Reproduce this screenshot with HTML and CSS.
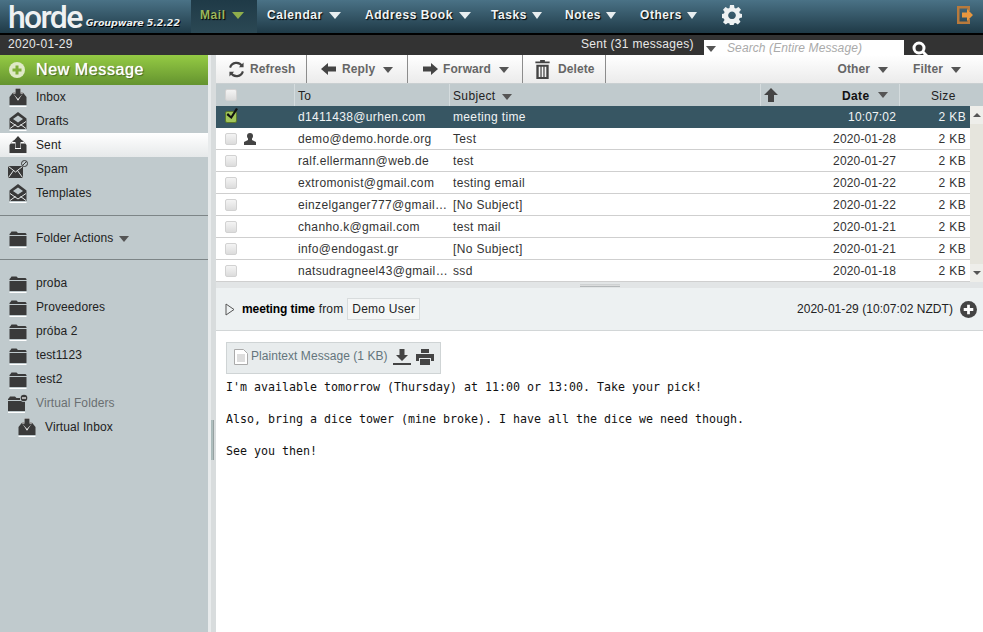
FILE: index.html
```html
<!DOCTYPE html>
<html lang="en">
<head>
<meta charset="utf-8">
<title>Horde Mail</title>
<link rel="stylesheet" href="styles.css">
</head>
<body>
<svg class="defs" width="0" height="0">
  <symbol id="i-inbox" viewBox="0 0 17 19"><path d="M4 4h9l4 5v8H0V9z"/><path d="M5 5.500h2V1h3v4.500h2L8.500 11z" fill="#fff" stroke="#fff" stroke-width="2"/><path d="M6 .5h5v5h2.500L8.500 11 3.500 5.500H6z"/><path d="M0 18h17v1H0z" fill="#fff"/></symbol>
  <symbol id="i-sent" viewBox="0 0 17 19"><path d="M4 4h9l4 5v8H0V9z"/><path d="M8.500 1l5 5.500h-3V12h-4V6.500h-3z" fill="#fff" stroke="#fff" stroke-width="2"/><path d="M8.500 0l5.500 6h-3v6H6V6H3z"/><path d="M0 18h17v1H0z" fill="#fff" opacity=".6"/></symbol>
  <symbol id="i-draft" viewBox="0 0 17 19"><path d="M8.500 0L17 6.500V17H0V6.500z"/><path d="M3.500 7l5-3.500 5 3.500-5 3.500z" fill="#c0cacd"/><path d="M.5 9.500l8 5.500 8-5.500M.5 16.500L6 12.500M16.500 16.500L11 12.500" fill="none" stroke="#e8ecec" stroke-width="1"/><path d="M0 18h17v1H0z" fill="#fff"/></symbol>
  <symbol id="i-spam" viewBox="0 0 20 19"><path d="M0 6h15v12H0z"/><path d="M.5 6.500l7 5.500 7-5.500M.5 17.500l5-7M14.500 17.500l-5-7" fill="none" stroke="#e8ecec"/><circle cx="16.500" cy="3.500" r="3" fill="#c0cacd" stroke="#3a3a3a"/><path d="M14.500 5.500l4-4" stroke="#3a3a3a"/></symbol>
  <symbol id="i-folder" viewBox="0 0 17 19"><path d="M1 4l1-1.500h5L8.500 4H16l1 1v1H0V5z"/><path d="M0 7h17v10H0z"/><path d="M0 18h17v1H0z" fill="#fff"/></symbol>
  <symbol id="i-vfolder" viewBox="0 0 20 19"><path d="M1 4l1-1.500h5L8.500 4H12v2H0V5z"/><path d="M0 7h15v1h2v9H0z"/><path d="M0 18h17v1H0z" fill="#fff"/><circle cx="16" cy="4" r="4" fill="#c0cacd"/><circle cx="16" cy="4" r="3.300"/><path d="M14 3.400h4v1.200h-4z" fill="#fff"/></symbol>
  <symbol id="i-person" viewBox="0 0 14 12"><circle cx="7" cy="3" r="3"/><path d="M5 5h4v2l4 2v3H1V9l4-2z"/></symbol>
</svg>

<header class="topbar">
  <div class="logo"><span class="logo-word">horde</span><span class="logo-ver">Groupware 5.2.22</span></div>
  <nav class="nav">
    <a class="nav-item active">Mail<i class="tri"></i></a>
    <a class="nav-item w-cal">Calendar<i class="tri"></i></a>
    <a class="nav-item w-addr">Address Book<i class="tri"></i></a>
    <a class="nav-item w-task">Tasks<i class="tri"></i></a>
    <a class="nav-item w-note">Notes<i class="tri"></i></a>
    <a class="nav-item w-oth">Others<i class="tri"></i></a>
    <svg class="gear" viewBox="0 0 20 20"><path fill-rule="evenodd" d="M8 0h4l.5 3 1.500.6L16.500 2 19 4.700 17.200 7l.7 1.500 2.100.5v3.500l-2.300.5-.7 1.600 1.500 2.200-2.700 2.600-2.200-1.500-1.600.6-.5 2.500H8l-.5-2.500-1.600-.6-2.200 1.500L1 17.300l1.500-2.200-.7-1.600-1.800-.5V9l2-.5.600-1.500L1 4.700 3.500 2 6 3.600 7.500 3zM10 6.500a3.800 3.800 0 1 0 .01 0z"/></svg>
  </nav>
  <svg class="exit" viewBox="0 0 18 20"><path d="M1 1h13v5h-2.500V3.500h-8v13h8V14H14v5H1z" fill="#b87a3c"/><path d="M6 7.500h5V4l6 6-6 6v-3.500H6z" fill="#e8973f"/></svg>
</header>

<div class="subbar">
  <span class="today">2020-01-29</span>
  <span class="msgcount">Sent (31 messages)</span>
  <div class="search"><i class="tri tri-grey"></i><span>Search (Entire Message)</span></div>
  <svg class="search-icon" viewBox="0 0 16 16"><circle cx="7" cy="7" r="5" fill="none" stroke="#fff" stroke-width="3"/><path d="M11 11l5 5" stroke="#fff" stroke-width="3"/></svg>
</div>

<div class="main">
  <aside class="sidebar">
    <div class="newmsg">
      <svg class="plus" viewBox="0 0 16 16"><circle cx="8" cy="8" r="8" fill="#dfe9c8"/><path d="M6.500 3.500h3v3h3v3h-3v3h-3v-3h-3v-3h3z" fill="#7fae3a"/></svg>
      <span>New Message</span>
    </div>
    <ul class="folders">
      <li class="folder"><svg class="ficon"><use href="#i-inbox"/></svg><span>Inbox</span></li>
      <li class="folder"><svg class="ficon"><use href="#i-draft"/></svg><span>Drafts</span></li>
      <li class="folder current"><svg class="ficon"><use href="#i-sent"/></svg><span>Sent</span></li>
      <li class="folder"><svg class="ficon"><use href="#i-spam"/></svg><span>Spam</span></li>
      <li class="folder"><svg class="ficon"><use href="#i-draft"/></svg><span>Templates</span></li>
    </ul>
    <div class="actions"><div class="folder"><svg class="ficon"><use href="#i-folder"/></svg><span>Folder Actions</span><i class="tri tri-grey tri-act"></i></div></div>
    <ul class="folders lower">
      <li class="folder"><svg class="ficon"><use href="#i-folder"/></svg><span>proba</span></li>
      <li class="folder"><svg class="ficon"><use href="#i-folder"/></svg><span>Proveedores</span></li>
      <li class="folder"><svg class="ficon"><use href="#i-folder"/></svg><span>próba 2</span></li>
      <li class="folder"><svg class="ficon"><use href="#i-folder"/></svg><span>test1123</span></li>
      <li class="folder"><svg class="ficon"><use href="#i-folder"/></svg><span>test2</span></li>
      <li class="folder muted"><svg class="ficon"><use href="#i-vfolder"/></svg><span>Virtual Folders</span></li>
      <li class="folder sub"><svg class="ficon"><use href="#i-inbox"/></svg><span>Virtual Inbox</span></li>
    </ul>
  </aside>
  <div class="vsplit"><i class="grip"></i></div>

  <section class="content">
    <div class="toolbar">
      <div class="tbtn b-refresh"><svg class="ticon" viewBox="0 0 18 18" fill="none" stroke="#444" stroke-width="2.200"><path d="M15 5.500A7 7 0 0 0 2.200 7"/><path d="M3 12.500A7 7 0 0 0 15.800 11"/><path d="M16.500 1.500v5h-5z" fill="#444" stroke="none"/><path d="M1.500 16.500v-5h5z" fill="#444" stroke="none"/></svg><span>Refresh</span></div>
      <div class="tbtn b-reply"><svg class="ticon" viewBox="0 0 16 14"><path d="M0 7l7-6v3.500h8v5H7V13z" fill="#444"/></svg><span>Reply</span><i class="tri tri-grey"></i></div>
      <div class="tbtn b-forward"><svg class="ticon" viewBox="0 0 16 14"><path d="M16 7L9 1v3.500H1v5h8V13z" fill="#444"/></svg><span>Forward</span><i class="tri tri-grey"></i></div>
      <div class="tbtn b-delete"><svg class="ticon trash" viewBox="0 0 15 20"><path d="M5 0h5v1.500h5v2H0v-2h5zM1 5h13v15H1zM3.500 7v11h1.800V7zM6.600 7v11h1.800V7zM9.700 7v11h1.800V7z" fill="#444" fill-rule="evenodd"/></svg><span>Delete</span></div>
      <div class="tb-right">
        <span class="tb-link">Other<i class="tri tri-grey"></i></span>
        <span class="tb-link">Filter<i class="tri tri-grey"></i></span>
      </div>
    </div>

    <div class="list-head">
      <div class="h-check"><i class="cb"></i></div>
      <div class="h-to">To</div>
      <div class="h-subj">Subject<i class="tri tri-grey"></i></div>
      <div class="h-date"><svg class="up" viewBox="0 0 14 15"><path d="M7 0l7 7H10v7H4V7H0z" fill="#444"/></svg><b>Date</b><i class="tri tri-grey"></i></div>
      <div class="h-size">Size</div>
    </div>

    <div class="list-wrap">
      <div class="rows">
        <div class="row selected"><div class="c-check"><i class="cb checked"><svg viewBox="0 0 14 14"><path d="M3 6l3 3 5-8 2 1-6.500 10L1.500 8z" fill="#111"/></svg></i></div><div class="c-to">d1411438@urhen.com</div><div class="c-subj">meeting time</div><div class="c-date">10:07:02</div><div class="c-size">2 KB</div></div>
        <div class="row"><div class="c-check"><i class="cb"></i><svg class="person"><use href="#i-person"/></svg></div><div class="c-to">demo@demo.horde.org</div><div class="c-subj">Test</div><div class="c-date">2020-01-28</div><div class="c-size">2 KB</div></div>
        <div class="row"><div class="c-check"><i class="cb"></i></div><div class="c-to">ralf.ellermann@web.de</div><div class="c-subj">test</div><div class="c-date">2020-01-27</div><div class="c-size">2 KB</div></div>
        <div class="row"><div class="c-check"><i class="cb"></i></div><div class="c-to">extromonist@gmail.com</div><div class="c-subj">testing email</div><div class="c-date">2020-01-22</div><div class="c-size">2 KB</div></div>
        <div class="row"><div class="c-check"><i class="cb"></i></div><div class="c-to">einzelganger777@gmail.com</div><div class="c-subj">[No Subject]</div><div class="c-date">2020-01-22</div><div class="c-size">2 KB</div></div>
        <div class="row"><div class="c-check"><i class="cb"></i></div><div class="c-to">chanho.k@gmail.com</div><div class="c-subj">test mail</div><div class="c-date">2020-01-21</div><div class="c-size">2 KB</div></div>
        <div class="row"><div class="c-check"><i class="cb"></i></div><div class="c-to">info@endogast.gr</div><div class="c-subj">[No Subject]</div><div class="c-date">2020-01-21</div><div class="c-size">2 KB</div></div>
        <div class="row"><div class="c-check"><i class="cb"></i></div><div class="c-to">natsudragneel43@gmail.com</div><div class="c-subj">ssd</div><div class="c-date">2020-01-18</div><div class="c-size">2 KB</div></div>
      </div>
      <div class="scrollbar"><div class="sb-btn"><i class="tri-up"></i></div><div class="sb-track"></div><div class="sb-btn"><i class="tri tri-grey"></i></div></div>
    </div>

    <div class="hsplit"><i class="hgrip"></i></div>

    <div class="pv-head">
      <svg class="expand" viewBox="0 0 10 13"><path d="M1 1l8 5.500L1 12z" fill="none" stroke="#555" stroke-width="1"/></svg>
      <b class="pv-subj">meeting time</b><span class="pv-from">from</span><span class="pv-user">Demo User</span>
      <span class="pv-date">2020-01-29 (10:07:02 NZDT)</span>
      <svg class="pv-plus" viewBox="0 0 16 16"><circle cx="8" cy="8" r="8" fill="#444"/><path d="M6.700 3.500h2.600v3.200h3.200v2.600H9.300v3.200H6.700V9.300H3.500V6.700h3.200z" fill="#fff"/></svg>
    </div>

    <div class="pv-body">
      <div class="attach">
        <svg class="doc" viewBox="0 0 14 16"><path d="M.5.500h9l4 4v11H.500z" fill="#fff" stroke="#aaa"/><path d="M3 6h8M3 8h8M3 10h8M3 12h8" stroke="#bbb"/></svg>
        <span>Plaintext Message (1 KB)</span>
        <svg class="att-ico" viewBox="0 0 18 16"><path d="M6.500 0h5v6H15l-6 6-6-6h3.500zM0 14h18v2H0z" fill="#444"/></svg>
        <svg class="att-ico print" viewBox="0 0 18 16"><path d="M5 0h8v4H5zM0 5h18v7h-3V9H3v3H0zM4 10h10v6H4z" fill="#444"/></svg>
      </div>
      <pre class="msg">I'm available tomorrow (Thursday) at 11:00 or 13:00. Take your pick!

Also, bring a dice tower (mine broke). I have all the dice we need though.

See you then!</pre>
    </div>
  </section>
</div>
</body>
</html>
```

FILE: styles.css
```css
* { box-sizing: border-box; }
html, body { height: 100%; }
body { margin: 0; overflow: hidden; background: #fff; color: #222; font: 12px/1.2 "Liberation Sans", Arial, sans-serif; letter-spacing: .35px; }
ul { list-style: none; margin: 0; padding: 0; }
i { font-style: normal; }
.defs { position: absolute; }

.tri { display: inline-block; width: 0; height: 0; border-left: 6px solid transparent; border-right: 6px solid transparent; border-top: 7px solid #e8eef0; }
.tri-grey { border-top-color: #555; border-left-width: 5.500px; border-right-width: 5.500px; border-top-width: 6px; }

.topbar { height: 35px; display: flex; align-items: stretch; background: linear-gradient(#4a7286, #1f3a47); border-bottom: 2px solid #000; }
.logo { width: 191px; padding-left: 8px; display: flex; align-items: flex-end; flex: none; }
.logo-word { font: 500 32px/30px Roboto, sans-serif; letter-spacing: -1.700px; color: #eef1f2; flex: none; margin-bottom: 1px; }
.logo-ver { font: italic 700 9.500px/12px "DejaVu Sans", sans-serif; letter-spacing: -.1px; color: #e8eef0; margin: 0 0 4px 4px; text-shadow: 1px 1px 0 #000; white-space: nowrap; }
.nav { display: flex; align-items: center; flex: 1; }
.nav-item { height: 33px; display: flex; align-items: center; padding: 0 0 3px 10px; font-weight: 700; color: #f0f4f5; letter-spacing: .55px; text-shadow: 1px 1px 1px #000; gap: 6px; flex: none; }
.nav-item.active { width: 66px; background: linear-gradient(#1f3a47, #2b4854); color: #9ab55a; padding-left: 9px; }
.nav-item.active .tri { border-top-color: #8fae4c; }
.w-cal { width: 98px; }
.w-addr { width: 126px; }
.w-task { width: 74px; }
.w-note { width: 75px; }
.w-oth { width: 80px; }
.w-oth .tri, .w-task .tri, .w-note .tri { border-left-width: 5.500px; border-right-width: 5.500px; margin-left: -1px; }
.gear { width: 20px; height: 20px; fill: #eef1f2; margin: -3px 0 0 12px; }
.exit { width: 18px; height: 20px; margin: 5px 9px 0 0; flex: none; }

.subbar { height: 20px; display: flex; background: #333; color: #e8e8e8; overflow: hidden; }
.today { padding: 2px 0 0 8px; width: 581px; }
.msgcount { padding-top: 2px; width: 123px; letter-spacing: .3px; white-space: nowrap; }
.search { width: 200px; height: 15px; margin-top: 5px; background: #fff; display: flex; align-items: center; color: #aaa; font-style: italic; letter-spacing: .1px; padding-top: 2px; }
.search .tri { margin: 1px 0 0 2px; }
.search span { margin-left: 11px; }
.search-icon { width: 16px; height: 16px; margin: 6px 0 0 8px; }

.main { display: flex; height: 577px; }
.sidebar { width: 208px; background: #c0cacd; letter-spacing: .1px; flex: none; }
.vsplit { width: 8px; background: linear-gradient(90deg, #e8ebec 3px, #d8dcdd 3px); display: flex; align-items: flex-start; padding-left: 3px; padding-top: 365px; flex: none; }
.grip { width: 3px; height: 40px; background: linear-gradient(90deg, #9aa, #bcc 1px, #8a9393); }
.newmsg { height: 30px; background: linear-gradient(#95cb44, #64932f); display: flex; align-items: center; padding-left: 9px; color: #fff; font-size: 16px; letter-spacing: .6px; text-shadow: 0 0 1px #fff, 1px 1px 1px #3a5a14; }
.plus { width: 16px; height: 16px; margin-right: 11px; }
.folder { height: 24px; display: flex; align-items: center; padding-left: 8px; color: #222; white-space: nowrap; }
.folder span { padding-top: 1px; }
.ficon { width: 20px; height: 19px; margin-right: 8px; fill: #3a3a3a; flex: none; }
.current { background: linear-gradient(#fff, #e6e9ea); }
.folders { padding-bottom: 10px; }
.actions { height: 45px; border-top: 1px solid #7d8587; border-bottom: 1px solid #7d8587; padding-top: 10px; }
.tri-act { margin-left: 6px; margin-top: 1px; }
.lower { padding-top: 11px; }
.muted { color: #6a6f71; }
.sub { padding-left: 17px; }

.content { flex: 1; min-width: 0; display: flex; flex-direction: column; }
.toolbar { height: 29px; display: flex; background: linear-gradient(#fff, #ebebeb); color: #666; font-weight: 700; letter-spacing: .1px; border-bottom: 1px solid #c9cfd1; }
.tbtn { display: flex; align-items: center; border-right: 1px solid #8c8c8c; padding-left: 12px; gap: 5px; }
.tbtn span, .tb-link { padding-top: 1px; }
.tbtn .tri { margin-left: 3px; margin-top: 1px; }
.b-refresh { width: 91px; }
.b-reply { width: 101px; padding-left: 14px; }
.b-forward { width: 115px; padding-left: 14px; }
.b-delete { width: 83px; }
.ticon { width: 16px; height: 14px; }
.b-refresh .ticon { width: 17px; height: 17px; }
.trash { width: 15px; height: 19px; margin-right: 3px; }
.tb-right { margin-left: auto; display: flex; align-items: center; gap: 25px; padding-right: 22px; }
.tb-link .tri { margin-left: 8px; }

.list-head { height: 22px; display: flex; background: #c0cacd; color: #222; align-items: center; flex: none; }
.list-head > div { height: 100%; display: flex; align-items: center; padding-top: 3px; }
.h-check { width: 78px; padding-left: 9px; }
.list-head > .h-check { padding-top: 0; }
.h-to { width: 155px; padding-left: 3px; border-left: 1px solid #d5dcde; }
.h-subj { width: 311px; padding-left: 3px; border-left: 1px solid #d5dcde; gap: 7px; }
.h-subj .tri { margin-top: 1px; }
.h-date { width: 139px; border-left: 1px solid #d5dcde; padding-left: 3px; }
.list-head > .h-date { padding-top: 0; }
.h-date b { margin: 2px 0 0 64px; color: #111; }
.h-date .tri { margin-left: 9px; }
.up { width: 14px; height: 15px; }
.h-size { flex: 1; padding-left: 31px; border-left: 1px solid #d5dcde; }

.cb { display: inline-block; width: 12px; height: 12px; background: linear-gradient(#f4f4f4, #dcdcdc); border: 1px solid #d2d2d2; border-radius: 2px; flex: none; position: relative; }
.cb.checked { background: #a2c65a; border-color: #5a7a2a; }
.cb.checked svg { position: absolute; left: -1px; top: -5px; width: 14px; height: 14px; }

.list-wrap { display: flex; height: 176px; flex: none; }
.rows { flex: 1; min-width: 0; }
.row { height: 22px; display: flex; align-items: center; border-bottom: 1px solid #cfcfcf; color: #333; }
.row > div:not(.c-check) { padding-top: 2px; }
.row.selected { background: #375663; color: #f0f4f5; border-bottom-color: #375663; }
.c-check { width: 82px; padding-left: 9px; display: flex; align-items: center; }
.person { width: 14px; height: 12px; margin-left: 6px; fill: #444; }
.c-to { width: 155px; overflow: hidden; text-overflow: ellipsis; white-space: nowrap; padding-right: 5px; }
.c-subj { flex: 1; }
.c-date { width: 96px; text-align: right; letter-spacing: .15px; }
.c-size { width: 74px; text-align: right; padding-right: 4px; }
.scrollbar { width: 13px; display: flex; flex-direction: column; background: #e6e5dd; }
.sb-btn { height: 18px; display: flex; align-items: center; justify-content: center; background: #eeeeea; }
.sb-btn .tri { border-left-width: 4px; border-right-width: 4px; border-top-width: 4px; }
.tri-up { width: 0; height: 0; border-left: 4px solid transparent; border-right: 4px solid transparent; border-bottom: 4px solid #555; }
.sb-track { flex: 1; }

.hsplit { height: 6px; background: #e2e5e6; display: flex; justify-content: center; padding-top: 2px; flex: none; }
.hgrip { width: 40px; height: 3px; background: linear-gradient(#b0b6b8, #eee 1px, #a0a6a8); }

.pv-head { height: 43px; display: flex; align-items: center; background: #edf1f2; border-bottom: 1px solid #d2d6d7; padding: 0 6px 0 9px; flex: none; color: #222; }
.expand { width: 10px; height: 13px; margin-right: 7px; }
.pv-subj { color: #000; letter-spacing: -.1px; }
.pv-from { margin-left: 4px; letter-spacing: .1px; }
.pv-user { margin-left: 4px; padding: 3px 4px; border: 1px solid #d8dcdd; background: #f4f6f6; letter-spacing: .25px; }
.pv-date { margin-left: auto; letter-spacing: .05px; }
.pv-plus { width: 17px; height: 17px; margin-left: 7px; }

.pv-body { flex: 1; padding: 11px 10px; }
.attach { width: 215px; height: 32px; display: flex; align-items: center; background: #e8eced; border: 1px solid #cfd4d5; padding: 0 0 3px 7px; color: #64757c; letter-spacing: .05px; }
.doc { width: 14px; height: 16px; margin-right: 3px; }
.att-ico { width: 18px; height: 16px; margin-left: 5px; }
.att-ico.print { margin-left: 5px; }
.msg { margin: 5px 0 0; font: 11.630px/16px "DejaVu Sans Mono", monospace; letter-spacing: 0; color: #111; }
```
